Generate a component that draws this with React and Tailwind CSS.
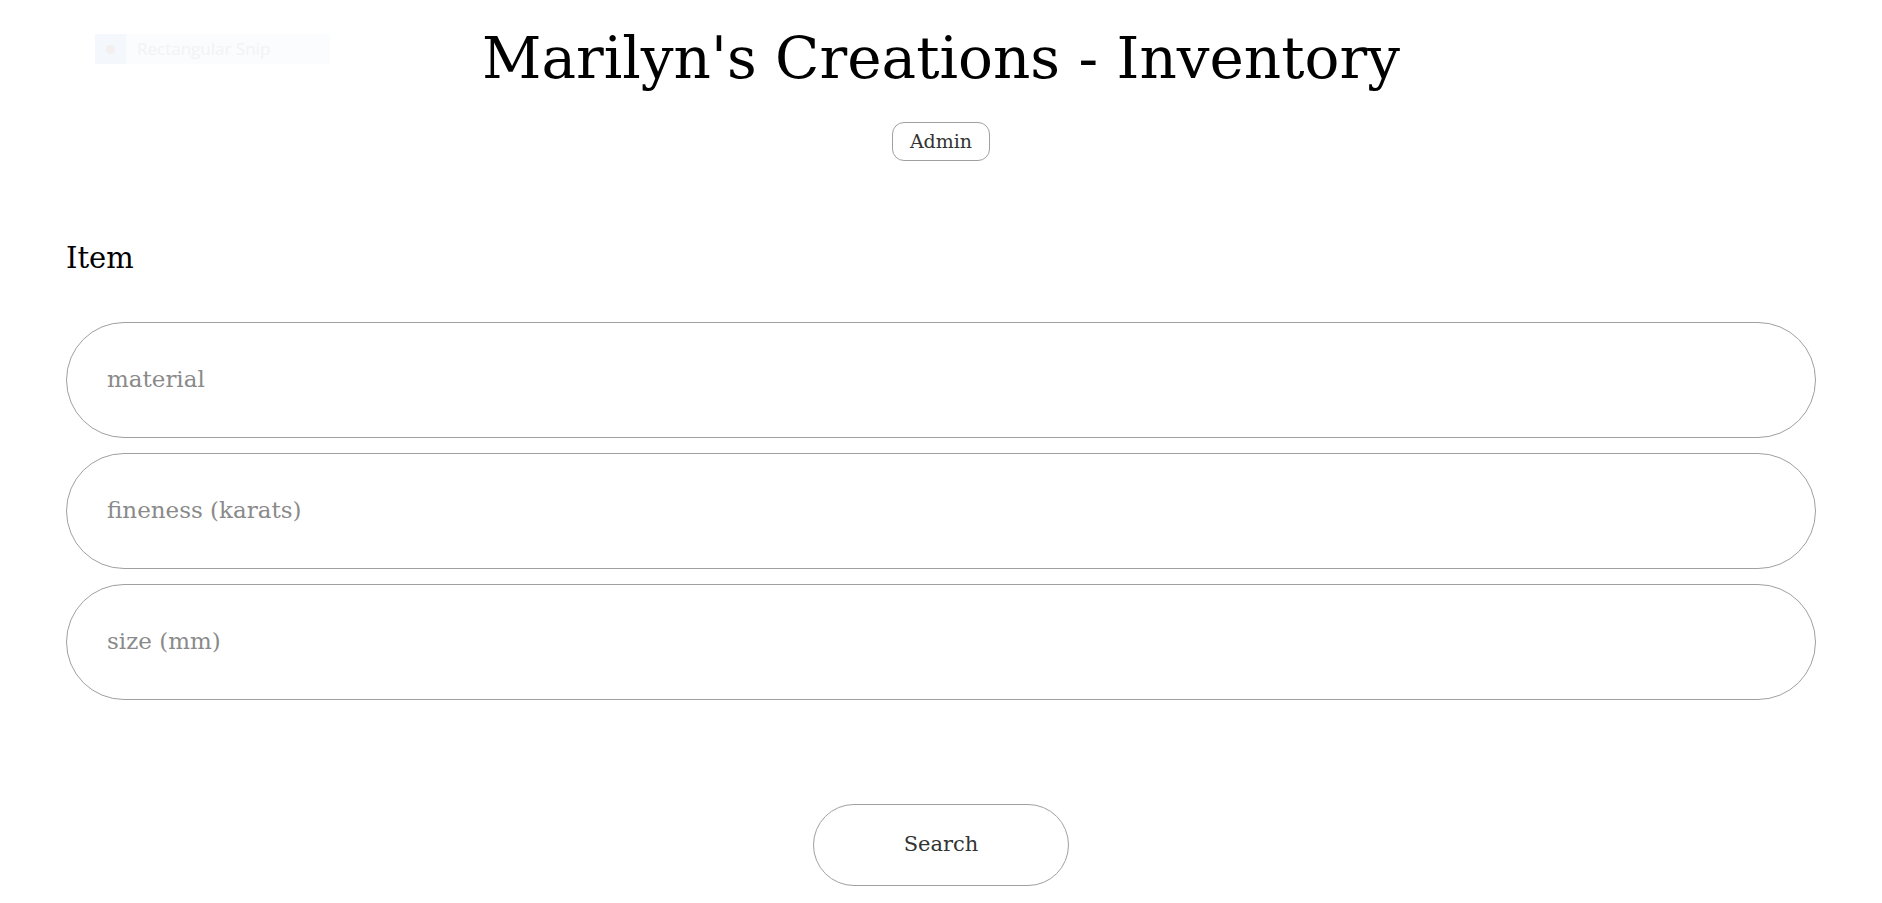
export default function App() {
  const fields = ["material", "fineness (karats)", "size (mm)"];

  return (
    <div
      className="relative min-h-screen bg-white text-black"
      style={{ fontFamily: '"DejaVu Serif", "Liberation Serif", serif' }}
    >
      {/* faint snip overlay left in the screenshot */}
      <div className="absolute left-[95px] top-[34px] flex h-[30px] w-[235px] items-center bg-[#fafcfe]">
        <div className="flex h-full w-[31px] items-center justify-center bg-[#f4f8fd]">
          <div className="h-[9px] w-[9px] rounded-full bg-[#f3efef]"></div>
        </div>
        <span
          className="pl-[11px] text-[17px] text-[#f1f3f6]"
          style={{ fontFamily: '"Open Sans", "Noto Sans", sans-serif' }}
        >
          Rectangular Snip
        </span>
      </div>

      <div className="flex flex-col items-center pt-[29px]">
        <h1 className="text-[58px] leading-none font-normal">
          Marilyn's Creations - Inventory
        </h1>
        <button className="mt-[35px] h-[39px] w-[98px] rounded-[12px] border border-[#a0a0a0] bg-white text-[19px] text-[#333]">
          Admin
        </button>
      </div>

      <div className="px-[66px] pt-[83px]">
        <h2 className="text-[29px] leading-none">Item</h2>

        <div className="mt-[49px] flex flex-col gap-[15px]">
          {fields.map((f) => (
            <input
              key={f}
              placeholder={f}
              className="h-[116px] w-full rounded-full border border-[#a0a0a0] bg-white pl-[40px] pb-[3px] text-[23px] outline-none placeholder:text-[#8a8a8a]"
            />
          ))}
        </div>

        <div className="mt-[104px] flex justify-center">
          <button className="h-[82px] w-[256px] rounded-full border border-[#a0a0a0] bg-white text-[21px] text-[#333]">
            Search
          </button>
        </div>
      </div>
    </div>
  );
}
